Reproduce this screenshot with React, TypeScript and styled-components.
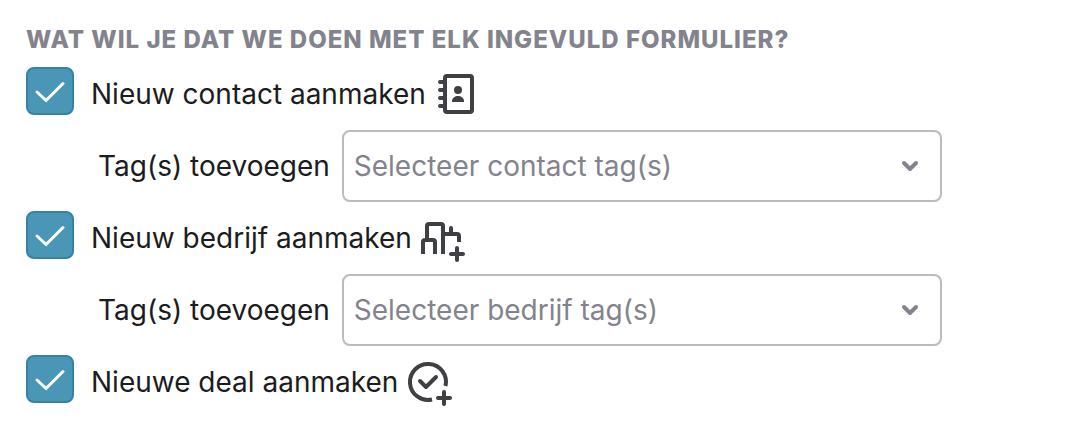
import React, { useState } from "react";
import styled, { createGlobalStyle } from "styled-components";

const GlobalStyle = createGlobalStyle`
  *, *::before, *::after { box-sizing: border-box; }
  body {
    margin: 0;
    background: #fff;
    color: #1b1c20;
    font-family: Inter, "Liberation Sans", sans-serif;
    font-size: 28px;
    line-height: 36px;
  }
`;

const Form = styled.form`
  padding: 22px 26px;
`;

const Group = styled.fieldset`
  margin: 0;
  padding: 0;
  border: 0;
  min-width: 0;
`;

const Title = styled.legend`
  padding: 0;
  color: #82838c;
  font-size: 24px;
  font-weight: 800;
  letter-spacing: 1px;
  text-transform: uppercase;
`;

const ActionRow = styled.div`
  display: flex;
  align-items: center;
  min-height: 72px;
`;

const ActionLabel = styled.label`
  display: flex;
  align-items: center;
  gap: 8px;
  padding-left: 17px;
`;

const TagRow = styled.div`
  display: flex;
  align-items: center;
  gap: 12px;
  padding-left: 72px;
`;

const TagLabel = styled.label`
  flex: none;
`;

const CheckWrap = styled.span`
  position: relative;
  flex: none;
  width: 48px;
  height: 48px;
  margin-bottom: 6px;
`;

const CheckInput = styled.input`
  appearance: none;
  display: block;
  width: 100%;
  height: 100%;
  margin: 0;
  border: 2px solid #b9babf;
  border-radius: 8px;
  background: #fff;
  cursor: pointer;

  &:checked {
    border-color: #3682a2;
    background: #4a96b6;
  }
`;

const CheckMark = styled.svg`
  position: absolute;
  inset: 0;
  pointer-events: none;
  fill: none;
  stroke: #fff;
  stroke-width: 3;
  stroke-linecap: round;
  stroke-linejoin: round;
`;

const SelectWrap = styled.div`
  position: relative;
  flex: 0 1 600px;
  min-width: 0;
`;

const SelectBox = styled.select`
  appearance: none;
  display: block;
  width: 100%;
  height: 72px;
  padding: 0 64px 0 10px;
  border: 2px solid #bbbbc0;
  border-radius: 8px;
  background: #fff;
  color: #82838c;
  font: inherit;
`;

const Chevron = styled.svg`
  position: absolute;
  top: 24px;
  right: 20px;
  pointer-events: none;
  fill: none;
  stroke: #82838c;
  stroke-width: 4;
  stroke-linecap: round;
  stroke-linejoin: round;
`;

const IconSvg = styled.svg`
  flex: none;
  fill: none;
  stroke: #3f4044;
  stroke-width: 4;
  stroke-linecap: round;
  stroke-linejoin: round;
`;

const ContactIcon = () => (
  <IconSvg width="48" height="48" viewBox="0 0 48 48" aria-hidden="true">
    <rect x="11" y="6" width="27" height="36" rx="2" />
    <path d="M6 12h4M6 20h4M6 28h4M6 36h4" />
    <circle cx="24" cy="20" r="4" fill="#3f4044" stroke="none" />
    <path d="M18 32v-1c0-3 3-5 6-5s6 2 6 5v1z" fill="#3f4044" stroke="none" />
  </IconSvg>
);

const CompanyIcon = () => (
  <IconSvg width="48" height="48" viewBox="0 0 48 48" aria-hidden="true">
    <path
      d="M3 40V28a2 2 0 0 1 2-2h8a2 2 0 0 1 2 2v12M7 25V12a2 2 0 0 1 2-2h12a2 2 0 0 1 2 2v28M23 20h14a2 2 0 0 1 2 2v6"
      strokeLinecap="butt"
    />
    <path d="M31 14v5M37 34v12M31 40h12" />
  </IconSvg>
);

const DealIcon = () => (
  <IconSvg width="48" height="48" viewBox="0 0 48 48" aria-hidden="true">
    <path d="M26 41.5A18 18 0 1 1 39.5 28" strokeLinecap="butt" />
    <path d="M14 23l6 6 10-10M38 34v12M32 40h12" />
  </IconSvg>
);

interface ActionProps {
  id: string;
  label: string;
  icon: React.ReactNode;
}

function Action({ id, label, icon }: ActionProps) {
  const [checked, setChecked] = useState(true);
  return (
    <ActionRow>
      <CheckWrap>
        <CheckInput
          id={id}
          type="checkbox"
          checked={checked}
          onChange={(e) => setChecked(e.target.checked)}
        />
        {checked && (
          <CheckMark width="48" height="48" viewBox="0 0 48 48" aria-hidden="true">
            <path d="M11 25l9 8.500 17-17" />
          </CheckMark>
        )}
      </CheckWrap>
      <ActionLabel htmlFor={id}>
        {label}
        {icon}
      </ActionLabel>
    </ActionRow>
  );
}

function TagSelect({ id, placeholder }: { id: string; placeholder: string }) {
  return (
    <TagRow>
      <TagLabel htmlFor={id}>Tag(s) toevoegen</TagLabel>
      <SelectWrap>
        <SelectBox id={id} defaultValue="">
          <option value="">{placeholder}</option>
        </SelectBox>
        <Chevron width="24" height="24" viewBox="0 0 24 24" aria-hidden="true">
          <path d="M6 9l6 6 6-6" />
        </Chevron>
      </SelectWrap>
    </TagRow>
  );
}

export default function App() {
  return (
    <>
      <GlobalStyle />
      <Form>
        <Group>
          <Title>Wat wil je dat we doen met elk ingevuld formulier?</Title>
          <Action id="contact" label="Nieuw contact aanmaken" icon={<ContactIcon />} />
          <TagSelect id="contact-tags" placeholder="Selecteer contact tag(s)" />
          <Action id="company" label="Nieuw bedrijf aanmaken" icon={<CompanyIcon />} />
          <TagSelect id="company-tags" placeholder="Selecteer bedrijf tag(s)" />
          <Action id="deal" label="Nieuwe deal aanmaken" icon={<DealIcon />} />
        </Group>
      </Form>
    </>
  );
}
